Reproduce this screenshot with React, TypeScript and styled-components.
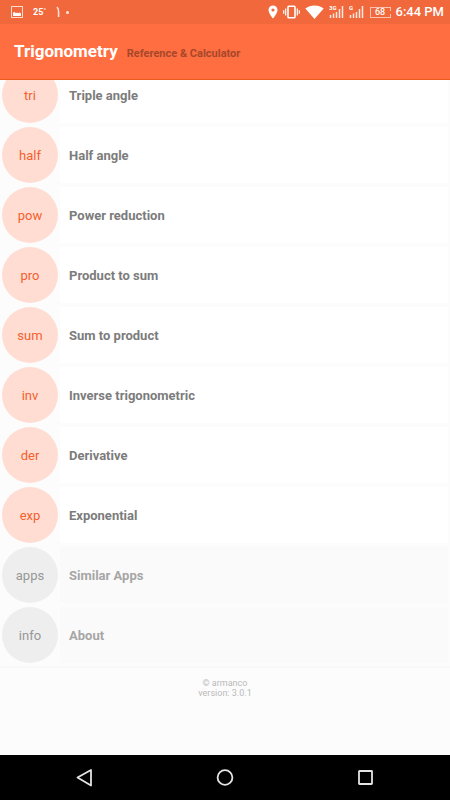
import React from "react";
import styled, { createGlobalStyle, css } from "styled-components";

const GlobalStyle = createGlobalStyle`
  * { box-sizing: border-box; }
  body { margin: 0; background: #fcfcfc; font-family: Roboto, "Noto Sans", sans-serif; }
`;

const Screen = styled.div`
  display: flex;
  flex-direction: column;
  height: 100vh;
  overflow: hidden;
`;

const StatusBar = styled.div`
  display: flex;
  justify-content: space-between;
  align-items: center;
  flex: none;
  height: 24px;
  padding: 0 6px 0 11px;
  background: #f0683b;
  color: #fff;
`;

const StatusGroup = styled.div<{ $gap: number }>`
  display: flex;
  align-items: center;
  gap: ${(p) => p.$gap}px;
  svg { display: block; flex: none; }
`;

const Temperature = styled.span`
  font-size: 9px;
  line-height: 12px;
  font-weight: 700;
`;

const Battery = styled.span`
  display: flex;
  align-items: center;
  justify-content: center;
  position: relative;
  width: 21px;
  height: 11px;
  margin-left: 1px;
  border: 1px solid #f9c3b1;
  font-size: 9px;
  line-height: 9px;
  font-weight: 500;
  &::after {
    content: "";
    position: absolute;
    right: -1px;
    top: 3px;
    width: 1px;
    height: 3px;
    background: #f0683b;
  }
`;

const Clock = styled.time`
  font-size: 13px;
  line-height: 16px;
  font-weight: 500;
  white-space: nowrap;
`;

const Header = styled.header`
  display: flex;
  align-items: baseline;
  gap: 9px;
  flex: none;
  height: 56px;
  padding: 16px 14px 0;
  background: #ff6e40;
  border-bottom: 1px solid #ea5a1c;
`;

const Title = styled.h1`
  margin: 0;
  color: #fff;
  font-size: 17px;
  line-height: 22px;
  font-weight: 700;
`;

const Subtitle = styled.span`
  color: #a6472a;
  font-size: 11px;
  line-height: 14px;
  font-weight: 700;
`;

const Content = styled.main`
  flex: 1;
  min-height: 0;
  overflow: hidden;
`;

const List = styled.ul`
  display: flex;
  flex-direction: column;
  gap: 4px;
  margin: -13px 0 0;
  padding: 0 2px 3px;
  list-style: none;
  border-bottom: 2px solid #f8f8f8;
`;

const Badge = styled.span`
  display: flex;
  align-items: center;
  justify-content: center;
  flex: none;
  width: 56px;
  height: 56px;
  padding-top: 1px;
  border-radius: 50%;
  font-size: 13px;
  line-height: 16px;
`;

const Label = styled.span`
  display: flex;
  align-items: center;
  flex: 1;
  height: 56px;
  padding: 1px 9px 0;
  font-size: 13px;
  line-height: 16px;
  font-weight: 700;
`;

const Row = styled.button<{ $muted: boolean }>`
  display: flex;
  gap: 2px;
  width: 100%;
  padding: 0;
  border: 0;
  background: none;
  font-family: inherit;
  text-align: left;
  cursor: pointer;
  ${(p) =>
    p.$muted
      ? css`
          ${Badge} { background: #eeeeee; color: #979797; }
          ${Label} { background: #fafafa; color: #a6a6a6; }
        `
      : css`
          ${Badge} { background: #ffddd3; color: #f4602e; }
          ${Label} { background: #ffffff; color: #7c7c7c; }
        `}
`;

const Footer = styled.footer`
  padding-top: 10px;
  color: #b9b9b9;
  font-size: 9px;
  line-height: 10px;
  text-align: center;
`;

const NavBar = styled.nav`
  display: flex;
  justify-content: space-around;
  align-items: center;
  flex: none;
  height: 45px;
  padding: 0 14px;
  background: #000;
`;

const NavButton = styled.button`
  display: flex;
  align-items: center;
  justify-content: center;
  width: 44px;
  height: 44px;
  padding: 0;
  border: 0;
  background: none;
  cursor: pointer;
`;

const PictureIcon = () => (
  <svg width="12" height="12" viewBox="0 0 12 12">
    <rect x=".5" y=".5" width="11" height="11" fill="none" stroke="#fbd9cd" />
    <path d="M2 10V6.500L3.500 6 5 7.200l1-.7 1.200.8L8.500 6.500l1.500 1V10z" fill="#fff" />
  </svg>
);

const DigitIcon = () => (
  <svg width="14" height="12" viewBox="0 0 14 12">
    <path d="M1 1c1.200 1.500 1.600 3 1.600 5v5" fill="none" stroke="#fde0d6" strokeWidth="1.600" />
    <circle cx="11.500" cy="6.500" r="1.500" fill="#fde6de" />
  </svg>
);

const PinIcon = () => (
  <svg width="10" height="14" viewBox="0 0 10 14">
    <path
      fillRule="evenodd"
      d="M5 .5A4.500 4.500 0 0 0 .5 5C.5 8.300 5 13.500 5 13.500S9.500 8.300 9.500 5A4.500 4.500 0 0 0 5 .5zm0 2.900a1.600 1.600 0 1 1 0 3.200 1.600 1.600 0 0 1 0-3.200z"
      fill="#fff"
    />
  </svg>
);

const VibrateIcon = () => (
  <svg width="17" height="14" viewBox="0 0 17 14">
    <rect x="5" y="1.200" width="7" height="11.600" rx=".8" fill="none" stroke="#fff" strokeWidth="1.600" />
    <path d="M2.700 3.500v7M14.300 3.500v7M.7 5.200v3.600M16.300 5.200v3.600" stroke="#fff" strokeWidth="1.200" />
  </svg>
);

const WifiIcon = () => (
  <svg width="19" height="14" viewBox="0 0 19 14">
    <path d="M9.500 14 .3 3.400C3 1.300 6 .4 9.500.4s6.500.9 9.200 3z" fill="#fff" />
  </svg>
);

const SignalIcon = ({ label }: { label: string }) => (
  <svg width="15" height="14" viewBox="0 0 15 14">
    <path
      d="M1.500 10v3M4.500 8.500V13M7.500 7v6M10.500 4v9M13.500 1v12"
      stroke="#fff"
      strokeOpacity=".85"
      strokeWidth="1.500"
    />
    <text x="0" y="5" fill="#fff" fontFamily="Roboto, sans-serif" fontSize="6" fontWeight="700">
      {label}
    </text>
  </svg>
);

const BackIcon = () => (
  <svg width="18" height="20" viewBox="0 0 18 20">
    <path d="M2.500 9.500 16 2v15.500z" fill="none" stroke="#e4e4e4" strokeWidth="1.800" strokeLinejoin="round" />
  </svg>
);

const HomeIcon = () => (
  <svg width="18" height="18" viewBox="0 0 18 18">
    <circle cx="9" cy="8.500" r="7.400" fill="none" stroke="#e4e4e4" strokeWidth="1.800" />
  </svg>
);

const RecentIcon = () => (
  <svg width="16" height="16" viewBox="0 0 16 16">
    <rect x="1" y="1" width="13" height="13" rx=".5" fill="none" stroke="#e4e4e4" strokeWidth="1.800" />
  </svg>
);

const entries = [
  { badge: "tri", label: "Triple angle" },
  { badge: "half", label: "Half angle" },
  { badge: "pow", label: "Power reduction" },
  { badge: "pro", label: "Product to sum" },
  { badge: "sum", label: "Sum to product" },
  { badge: "inv", label: "Inverse trigonometric" },
  { badge: "der", label: "Derivative" },
  { badge: "exp", label: "Exponential" },
  { badge: "apps", label: "Similar Apps", muted: true },
  { badge: "info", label: "About", muted: true },
];

export default function App() {
  return (
    <Screen>
      <GlobalStyle />
      <StatusBar>
        <StatusGroup $gap={10}>
          <PictureIcon />
          <Temperature>25˚</Temperature>
          <DigitIcon />
        </StatusGroup>
        <StatusGroup $gap={5}>
          <PinIcon />
          <VibrateIcon />
          <WifiIcon />
          <SignalIcon label="3G" />
          <SignalIcon label="G" />
          <Battery>68</Battery>
          <Clock>6:44 PM</Clock>
        </StatusGroup>
      </StatusBar>
      <Header>
        <Title>Trigonometry</Title>
        <Subtitle>Reference &amp; Calculator</Subtitle>
      </Header>
      <Content>
        <List>
          {entries.map((entry) => (
            <li key={entry.badge}>
              <Row type="button" $muted={!!entry.muted}>
                <Badge>{entry.badge}</Badge>
                <Label>{entry.label}</Label>
              </Row>
            </li>
          ))}
        </List>
        <Footer>
          <div>© armanco</div>
          <div>version: 3.0.1</div>
        </Footer>
      </Content>
      <NavBar>
        <NavButton type="button" aria-label="Back"><BackIcon /></NavButton>
        <NavButton type="button" aria-label="Home"><HomeIcon /></NavButton>
        <NavButton type="button" aria-label="Recent apps"><RecentIcon /></NavButton>
      </NavBar>
    </Screen>
  );
}
